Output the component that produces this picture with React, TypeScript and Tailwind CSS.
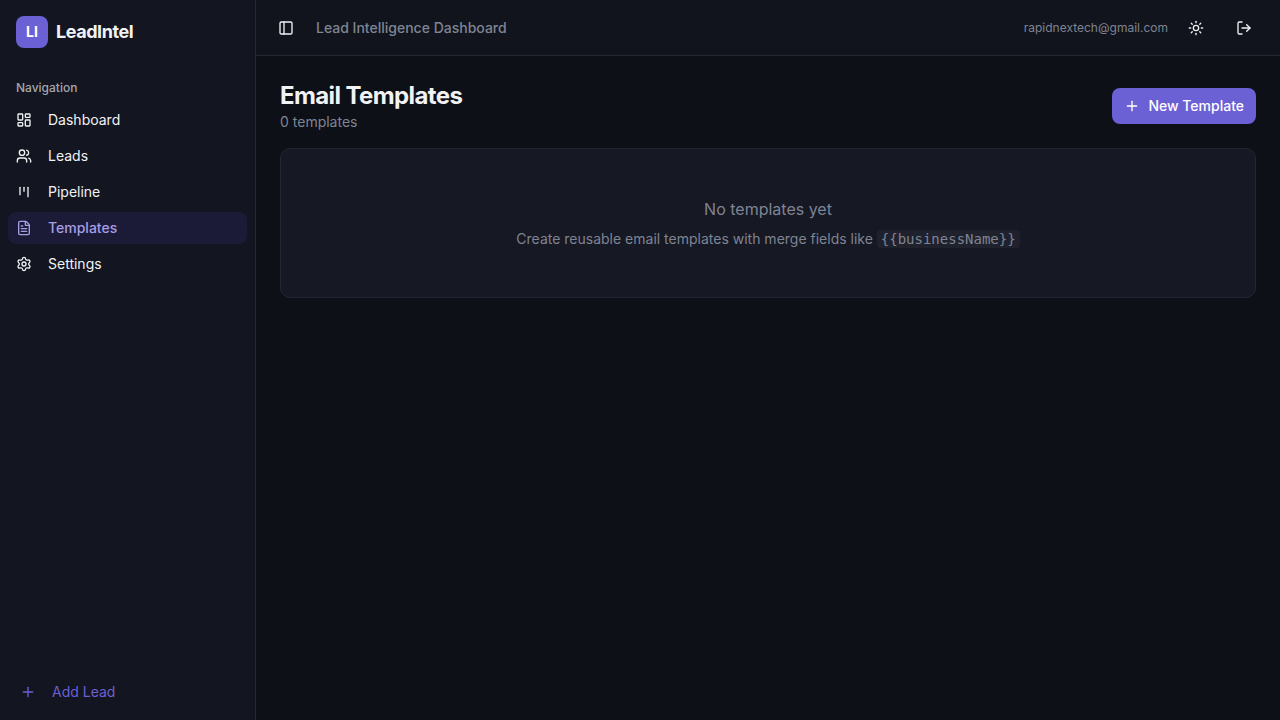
import type { SVGProps } from 'react';
import {
  FileText,
  LayoutDashboard,
  LogOut,
  PanelLeft,
  Plus,
  Settings,
  Sun,
  Users,
} from 'lucide-react';
import { clsx } from 'clsx';

function PipelineIcon(props: SVGProps<SVGSVGElement>) {
  return (
    <svg
      viewBox="0 0 24 24"
      fill="none"
      stroke="currentColor"
      strokeWidth="2"
      strokeLinecap="round"
      strokeLinejoin="round"
      aria-hidden="true"
      {...props}
    >
      <path d="M6 5v11" />
      <path d="M12 5v6" />
      <path d="M18 5v14" />
    </svg>
  );
}

const navItems = [
  { title: 'Dashboard', href: '/dashboard', icon: LayoutDashboard },
  { title: 'Leads', href: '/leads', icon: Users },
  { title: 'Pipeline', href: '/pipeline', icon: PipelineIcon },
  { title: 'Templates', href: '/templates', icon: FileText },
  { title: 'Settings', href: '/settings', icon: Settings },
];

function AppSidebar({ active }: { active: string }) {
  return (
    <aside className="flex w-64 shrink-0 flex-col border-r border-[#252733] bg-[#131520]">
      <div className="flex items-center gap-2 p-4">
        <div className="flex size-8 items-center justify-center rounded-lg bg-[#6c60d5] text-sm font-bold text-white">
          LI
        </div>
        <span className="text-lg font-bold tracking-tight">LeadIntel</span>
      </div>

      <nav className="flex-1 p-2" aria-labelledby="nav-label">
        <h2 id="nav-label" className="flex h-8 items-center px-2 text-xs font-medium text-[#a6a7ac]">
          Navigation
        </h2>
        <ul className="flex flex-col gap-1">
          {navItems.map(({ title, href, icon: Icon }) => (
            <li key={href}>
              <a
                href={href}
                aria-current={href === active ? 'page' : undefined}
                className={clsx(
                  'flex h-8 items-center gap-4 rounded-lg px-2 text-sm',
                  href === active ? 'bg-[#1c1b37] font-medium text-[#a79ee6]' : 'hover:bg-[#1b1d29]'
                )}
              >
                <Icon className="size-4" />
                {title}
              </a>
            </li>
          ))}
        </ul>
      </nav>

      <div className="p-3">
        <button type="button" className="flex h-8 w-full items-center gap-4 rounded-lg px-2 text-sm text-[#6c60d5]">
          <Plus className="size-4" />
          Add Lead
        </button>
      </div>
    </aside>
  );
}

function TopBar() {
  return (
    <header className="flex h-14 items-center justify-between border-b border-[#252733] bg-[#11141c] px-4">
      <div className="flex items-center gap-4">
        <button type="button" aria-label="Toggle sidebar" className="flex size-7 items-center justify-center rounded-md">
          <PanelLeft className="size-4" />
        </button>
        <span className="text-sm font-medium text-[#7f8493]">Lead Intelligence Dashboard</span>
      </div>
      <div className="flex items-center gap-2">
        <span className="text-xs text-[#7f8493]">rapidnextech@gmail.com</span>
        <button type="button" aria-label="Toggle theme" className="flex size-10 items-center justify-center rounded-md">
          <Sun className="size-4" />
        </button>
        <button type="button" aria-label="Sign out" className="flex size-10 items-center justify-center rounded-md">
          <LogOut className="size-4" />
        </button>
      </div>
    </header>
  );
}

function TemplatesPage() {
  return (
    <main className="flex flex-1 flex-col gap-4 p-6">
      <div className="flex items-center justify-between">
        <div>
          <h1 className="text-2xl font-bold tracking-tight">Email Templates</h1>
          <p className="text-sm text-[#7f8493]">0 templates</p>
        </div>
        <button
          type="button"
          className="flex h-9 items-center gap-2 rounded-lg bg-[#6c60d5] px-3 text-sm font-medium text-white"
        >
          <Plus className="size-4" />
          New Template
        </button>
      </div>

      {/* Empty state */}
      <div className="rounded-[10px] border border-[#232532] bg-[#161823] p-12 text-center text-[#7f8493]">
        <p>No templates yet</p>
        <p className="mt-2 text-sm">
          Create reusable email templates with merge fields like{' '}
          <code className="rounded-sm bg-[#1f212d] px-1 py-px font-['DejaVu_Sans_Mono',monospace]">
            {'{{businessName}}'}
          </code>
        </p>
      </div>
    </main>
  );
}

export default function App() {
  return (
    <div className="flex min-h-screen bg-[#0d1017] font-['Inter',sans-serif] text-[#f1f2f4] antialiased">
      <AppSidebar active="/templates" />
      <div className="flex min-w-0 flex-1 flex-col">
        <TopBar />
        <TemplatesPage />
      </div>
    </div>
  );
}
